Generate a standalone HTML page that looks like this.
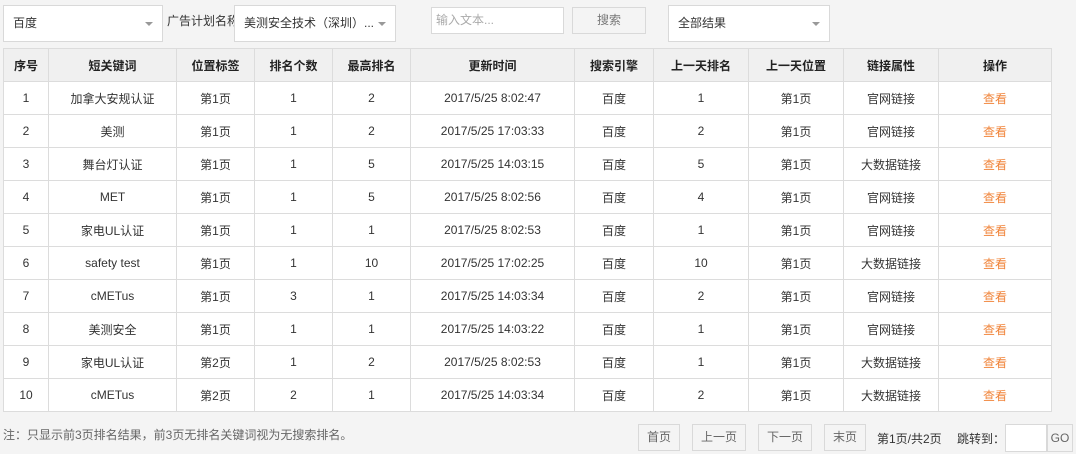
<!DOCTYPE html>
<html><head><meta charset="utf-8"><style>
body{margin:0;width:1076px;height:454px;background:#f4f4f4;font-family:"Liberation Sans","Noto Sans CJK SC",sans-serif;font-size:12px;color:#333;position:relative;overflow:hidden}
.a{position:absolute;box-sizing:border-box}
.sel{background:#fff;border:1px solid #d9d9d9;height:37px;top:5px;line-height:35px;padding-left:9px;font-size:12px}
.sel:after{content:"";position:absolute;right:9px;top:16px;border:4px solid transparent;border-top:4px solid #999}
table{position:absolute;left:3px;top:48px;border-collapse:collapse;background:#fff}
td,th{border:1px solid #dcdcdc;height:32px;padding:0;text-align:center;font-size:12px}
th{background:#f0f0f0;font-weight:bold;color:#222}
.o{color:#f0843a}
.btn{border:1px solid #d9d9d9;background:#f4f4f4;color:#666;text-align:center;height:27px;line-height:25px;top:424px}
</style></head><body>
<div class="a sel" style="left:3px;width:160px">百度</div>
<div class="a" style="left:167px;top:12px;width:70px;overflow:hidden;white-space:nowrap">广告计划名称</div>
<div class="a sel" style="left:234px;width:162px">美测安全技术（深圳）...</div>
<div class="a" style="left:431px;top:7px;width:133px;height:27px;background:#fff;border:1px solid #d9d9d9;line-height:25px;padding-left:4px;color:#aaa">输入文本...</div>
<div class="a" style="left:572px;top:7px;width:74px;height:27px;border:1px solid #d9d9d9;line-height:25px;text-align:center;color:#777">搜索</div>
<div class="a sel" style="left:668px;width:162px">全部结果</div>
<table>
<tr><th style="width:44px">序号</th><th style="width:127px">短关键词</th><th style="width:77px">位置标签</th><th style="width:77px">排名个数</th><th style="width:77px">最高排名</th><th style="width:163px">更新时间</th><th style="width:78px">搜索引擎</th><th style="width:94px">上一天排名</th><th style="width:94px">上一天位置</th><th style="width:94px">链接属性</th><th style="width:112px">操作</th></tr>
<tr><td>1</td><td>加拿大安规认证</td><td>第1页</td><td>1</td><td>2</td><td>2017/5/25 8:02:47</td><td>百度</td><td>1</td><td>第1页</td><td>官网链接</td><td class="o">查看</td></tr>
<tr><td>2</td><td>美测</td><td>第1页</td><td>1</td><td>2</td><td>2017/5/25 17:03:33</td><td>百度</td><td>2</td><td>第1页</td><td>官网链接</td><td class="o">查看</td></tr>
<tr><td>3</td><td>舞台灯认证</td><td>第1页</td><td>1</td><td>5</td><td>2017/5/25 14:03:15</td><td>百度</td><td>5</td><td>第1页</td><td>大数据链接</td><td class="o">查看</td></tr>
<tr><td>4</td><td>MET</td><td>第1页</td><td>1</td><td>5</td><td>2017/5/25 8:02:56</td><td>百度</td><td>4</td><td>第1页</td><td>官网链接</td><td class="o">查看</td></tr>
<tr><td>5</td><td>家电UL认证</td><td>第1页</td><td>1</td><td>1</td><td>2017/5/25 8:02:53</td><td>百度</td><td>1</td><td>第1页</td><td>官网链接</td><td class="o">查看</td></tr>
<tr><td>6</td><td>safety test</td><td>第1页</td><td>1</td><td>10</td><td>2017/5/25 17:02:25</td><td>百度</td><td>10</td><td>第1页</td><td>大数据链接</td><td class="o">查看</td></tr>
<tr><td>7</td><td>cMETus</td><td>第1页</td><td>3</td><td>1</td><td>2017/5/25 14:03:34</td><td>百度</td><td>2</td><td>第1页</td><td>官网链接</td><td class="o">查看</td></tr>
<tr><td>8</td><td>美测安全</td><td>第1页</td><td>1</td><td>1</td><td>2017/5/25 14:03:22</td><td>百度</td><td>1</td><td>第1页</td><td>官网链接</td><td class="o">查看</td></tr>
<tr><td>9</td><td>家电UL认证</td><td>第2页</td><td>1</td><td>2</td><td>2017/5/25 8:02:53</td><td>百度</td><td>1</td><td>第1页</td><td>大数据链接</td><td class="o">查看</td></tr>
<tr><td>10</td><td>cMETus</td><td>第2页</td><td>2</td><td>1</td><td>2017/5/25 14:03:34</td><td>百度</td><td>2</td><td>第1页</td><td>大数据链接</td><td class="o">查看</td></tr>
</table>
<div class="a" style="left:3px;top:426px;color:#666">注：只显示前3页排名结果，前3页无排名关键词视为无搜索排名。</div>
<div class="a btn" style="left:638px;width:42px">首页</div>
<div class="a btn" style="left:692px;width:54px">上一页</div>
<div class="a btn" style="left:758px;width:54px">下一页</div>
<div class="a btn" style="left:824px;width:42px">末页</div>
<div class="a" style="left:877px;top:430px">第1页/共2页</div>
<div class="a" style="left:957px;top:430px">跳转到：</div>
<div class="a" style="left:1005px;top:424px;width:42px;height:28px;background:#fff;border:1px solid #d9d9d9"></div>
<div class="a" style="left:1047px;top:424px;width:26px;height:28px;border:1px solid #d9d9d9;line-height:26px;text-align:center;color:#666">GO</div>
</body></html>
